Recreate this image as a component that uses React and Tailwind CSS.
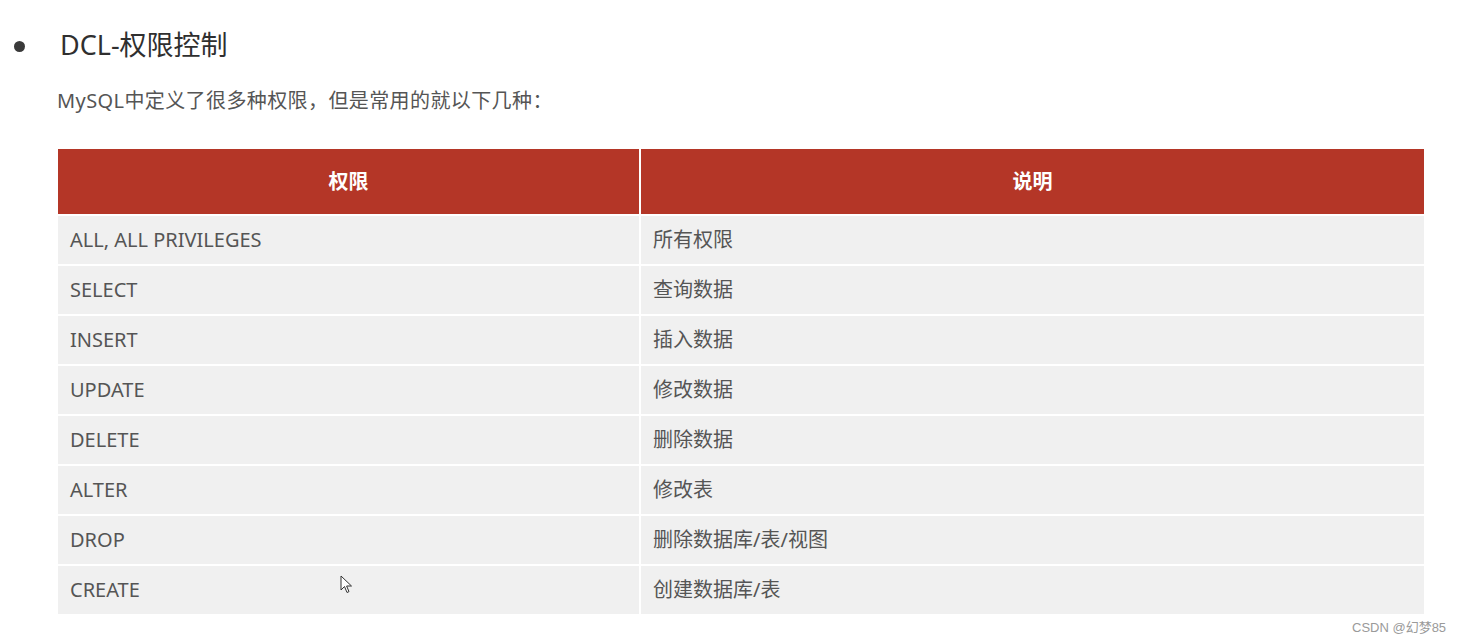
import React from "react";

const rows = [
    ["ALL, ALL PRIVILEGES", "所有权限"],
    ["SELECT", "查询数据"],
    ["INSERT", "插入数据"],
    ["UPDATE", "修改数据"],
    ["DELETE", "删除数据"],
    ["ALTER", "修改表"],
    ["DROP", "删除数据库/表/视图"],
    ["CREATE", "创建数据库/表"],
];

const font = { fontFamily: '"Noto Sans", "Noto Sans CJK SC", sans-serif' };

export default function App() {
    return (
        <div className="relative w-[1463px] h-[644px] bg-white overflow-hidden" style={font}>
            {/* title */}
            <div className="flex items-center pt-[26px] pl-[14px] h-[66px]">
                <span className="w-[11px] h-[11px] rounded-full bg-[#3a3a3a]"></span>
                <h1 className="ml-[35px] text-[27px] leading-[36px] text-[#2f2f2f] -mt-[2px]">DCL-权限控制</h1>
            </div>

            <p className="mt-[21px] ml-[57px] text-[20px] leading-[28px] tracking-[0.4px] text-[#555]">
                MySQL中定义了很多种权限，但是常用的就以下几种：
            </p>

            {/* table */}
            <div className="mt-[34px] ml-[58px] w-[1366px] flex flex-col gap-[2px]">
                <div className="grid grid-cols-[581px_1fr] gap-[2px] h-[65px]">
                    <div className="bg-[#b43627] flex items-center justify-center text-white font-bold text-[20px]">权限</div>
                    <div className="bg-[#b43627] flex items-center justify-center text-white font-bold text-[20px]">说明</div>
                </div>
                {rows.map(([k, v]) => (
                    <div key={k} className="grid grid-cols-[581px_1fr] gap-[2px] h-[48px]">
                        <div className="bg-[#f0f0f0] flex items-center pl-[12px] text-[20px] text-[#555]">{k}</div>
                        <div className="bg-[#f0f0f0] flex items-center pl-[12px] text-[20px] text-[#555]">{v}</div>
                    </div>
                ))}
            </div>

            {/* mouse cursor */}
            <svg className="absolute left-[340px] top-[575px]" width="13" height="20" viewBox="0 0 13 20">
                <path d="M1 1 L1 15 L4.5 11.5 L7 17.5 L9 16.6 L6.6 11 L11.5 11 Z" fill="#fff" stroke="#333" strokeWidth="1" strokeLinejoin="round" />
            </svg>

            <div className="absolute left-[1352px] top-[619px] text-[13px] leading-[18px] text-[#9a9a9a]" style={{ fontFamily: '"Liberation Sans", "Noto Sans CJK SC", sans-serif' }}>
                CSDN @幻梦85
            </div>
        </div>
    );
}
